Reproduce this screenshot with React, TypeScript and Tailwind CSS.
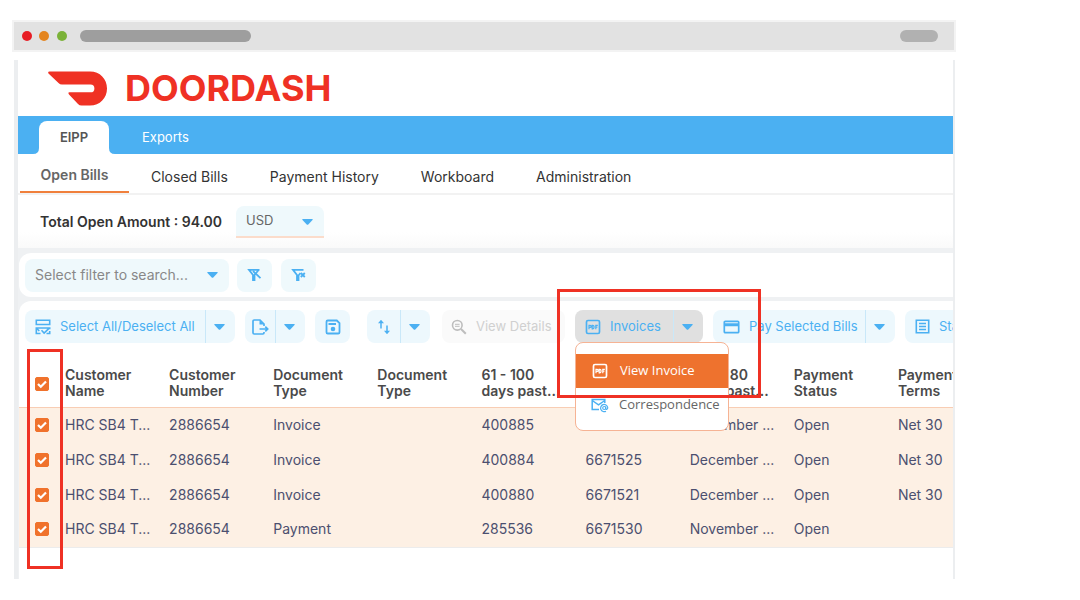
import { useState } from "react";
import type { ReactNode } from "react";
import { clsx } from "clsx";

const subTabs = ["Closed Bills", "Payment History", "Workboard", "Administration"];

const columns = [
  ["Customer", "Name"],
  ["Customer", "Number"],
  ["Document", "Type"],
  ["Document", "Type"],
  ["61 - 100", "days past..."],
  ["", ""],
  ["121 - 180", "days past..."],
  ["Payment", "Status"],
  ["Payment", "Terms"],
];

const bills = [
  ["HRC SB4 T...", "2886654", "Invoice", "", "400885", "", "December ...", "Open", "Net 30"],
  ["HRC SB4 T...", "2886654", "Invoice", "", "400884", "6671525", "December ...", "Open", "Net 30"],
  ["HRC SB4 T...", "2886654", "Invoice", "", "400880", "6671521", "December ...", "Open", "Net 30"],
  ["HRC SB4 T...", "2886654", "Payment", "", "285536", "6671530", "November ...", "Open", ""],
];

function Caret() {
  return (
    <svg width="11" height="6" viewBox="0 0 11 6" className="shrink-0" aria-hidden="true">
      <path d="M.8 0h9.400q1 0 .3 1L6.500 5.200q-1 1-2 0L.5 1Q-.2 0 .8 0z" fill="#4bb0f2" />
    </svg>
  );
}

function PdfIcon() {
  return (
    <svg width="16" height="16" viewBox="0 0 16 16" fill="none" stroke="currentColor" aria-hidden="true">
      <rect x="1.500" y="1.500" width="13" height="13" rx="1.500" strokeWidth="1.700" />
      <path
        d="M4 10.200V6.400h1.200a.9.9 0 0 1 0 2H4M7.200 6.400v3.400h.6a1.200 1.200 0 0 0 1.200-1.200V7.600a1.200 1.200 0 0 0-1.200-1.200zM10.800 10.200V6.400h2M10.800 8.200h1.600"
        strokeWidth="1.200"
      />
    </svg>
  );
}

function SelectAllIcon() {
  return (
    <svg width="16" height="16" viewBox="0 0 16 16" fill="none" stroke="currentColor" strokeWidth="1.600" aria-hidden="true">
      <path d="M1.300 1.300h13.400v4.200H1.300zM5.500 14.500H1.300V9h13.400v1.200M1.300 9l3 3M6.500 11.300l2.600 2.700 4.900-4.700M11.500 14.500h3.200V12" />
    </svg>
  );
}

function ExportIcon() {
  return (
    <svg width="18" height="18" viewBox="0 0 18 18" fill="none" stroke="currentColor" strokeWidth="1.700" aria-hidden="true">
      <path d="M13 8V6L9 2H3.200Q2 2 2 3.200v11.600Q2 16 3.200 16h8.600q1.200 0 1.200-1.200V14M8.500 11h8M14.300 8.600l2.400 2.400-2.400 2.400" />
      <path d="M8.500 2v4.500H13z" fill="currentColor" stroke="none" />
    </svg>
  );
}

function SaveIcon() {
  return (
    <svg width="16" height="16" viewBox="0 0 16 16" fill="none" stroke="currentColor" aria-hidden="true">
      <path d="M2.800 1.500h9l2.700 2.700v9q0 1.300-1.300 1.300H2.800q-1.300 0-1.300-1.300V2.800q0-1.300 1.300-1.300z" strokeWidth="1.800" />
      <path d="M3.500 5h7.500" strokeWidth="2.200" />
      <circle cx="8" cy="10" r="2.300" fill="currentColor" stroke="none" />
    </svg>
  );
}

function SortIcon() {
  return (
    <svg width="14" height="16" viewBox="0 0 14 16" fill="none" stroke="currentColor" strokeWidth="1.500" aria-hidden="true">
      <path d="M4 9.500V3M10 6.500V13" />
      <path d="M4 .8l3 3.400H1zM10 15.200l-3-3.400h6z" fill="currentColor" stroke="none" />
    </svg>
  );
}

function DetailsIcon() {
  return (
    <svg width="16" height="16" viewBox="0 0 16 16" fill="none" stroke="currentColor" aria-hidden="true">
      <circle cx="6.300" cy="6.300" r="4.800" strokeWidth="1.600" />
      <path d="M4 5.300h4.600M4 7.300h4.600" strokeWidth="1" />
      <path d="M10 10l4.800 4.800" strokeWidth="2" />
    </svg>
  );
}

function CardIcon() {
  return (
    <svg width="17" height="14" viewBox="0 0 17 14" fill="none" stroke="currentColor" aria-hidden="true">
      <rect x="1.300" y="1.300" width="14.400" height="11.400" rx="1" strokeWidth="1.700" />
      <path d="M1 4.800h15" strokeWidth="3" />
    </svg>
  );
}

function StatementIcon() {
  return (
    <svg width="15" height="15" viewBox="0 0 15 15" fill="none" stroke="currentColor" aria-hidden="true">
      <path d="M1.300 1.300h12.400v12.400H1.300z" strokeWidth="1.600" />
      <path d="M4 4.500h7M4 7.500h7M4 10.500h7" strokeWidth="1.500" />
    </svg>
  );
}

function MailIcon() {
  return (
    <svg width="18" height="15" viewBox="0 0 18 15" fill="none" stroke="currentColor" strokeWidth="1.500" aria-hidden="true">
      <path d="M8 11.500H1.200v-10h12.600V5M1.200 2.500l6.300 4.300 6.300-4.300" />
      <circle cx="13.200" cy="10" r="1.500" strokeWidth="1.200" />
      <path d="M14.700 8.500v2q.2 1 1.200.8 1-.6.8-2a3.600 3.600 0 1 0-1.700 3.900" strokeWidth="1.200" />
    </svg>
  );
}

function FilterIcon({ clear }: { clear?: boolean }) {
  return (
    <svg width="15" height="14" viewBox="0 0 15 14" fill="none" stroke="currentColor" strokeWidth="1.800" aria-hidden="true">
      {clear ? (
        <>
          <path d="M12.500 1.800H2L6 7v5.200h1.500V7.500L9.500 5" />
          <path d="M9.800 5l4 4M13.800 5l-4 4" />
        </>
      ) : (
        <>
          <path d="M12.500 1.800H2L6 7v5.200h1.500V7L11.800 1.800" />
          <path d="M6 3l7.500 7.200" />
        </>
      )}
    </svg>
  );
}

type ToolButtonProps = {
  icon: ReactNode;
  label: string;
  hideLabel?: boolean;
  menu?: boolean;
  active?: boolean;
  className?: string;
};

function ToolButton({ icon, label, hideLabel, menu, active, className }: ToolButtonProps) {
  return (
    <div
      className={clsx(
        "flex h-[33px] shrink-0 overflow-hidden rounded-lg text-[#4bb0f2]",
        active ? "bg-[#e0e0e0]" : "bg-[#edf8fd]",
        className
      )}
    >
      <button
        type="button"
        aria-label={label}
        className={clsx(
          "flex min-w-0 flex-1 items-center gap-[9px] whitespace-nowrap",
          hideLabel ? "justify-center" : "pl-[10px]"
        )}
      >
        <span className="shrink-0">{icon}</span>
        {!hideLabel && label}
      </button>
      {menu && (
        <button
          type="button"
          aria-label={`${label} options`}
          className="flex w-[30px] items-center justify-center border-l border-[#c9e8f9] pr-[2px]"
        >
          <Caret />
        </button>
      )}
    </div>
  );
}

type CheckProps = { label: string; checked: boolean; onChange: () => void };

function Check({ label, checked, onChange }: CheckProps) {
  return (
    <label className="relative ml-4 block size-[14px]">
      <input
        type="checkbox"
        aria-label={label}
        checked={checked}
        onChange={onChange}
        className="block size-[14px] appearance-none rounded-[2px] border border-[#f0722c] checked:bg-[#f0722c]"
      />
      <svg viewBox="0 0 14 14" className="pointer-events-none absolute inset-0" aria-hidden="true">
        <path d="M3 7l2.800 2.800L11 4.500" fill="none" stroke="#fff" strokeWidth="2.200" />
      </svg>
    </label>
  );
}

export default function App() {
  const [selected, setSelected] = useState([true, true, true, true]);
  const allSelected = selected.every(Boolean);

  const toggle = (index: number) => {
    setSelected(selected.map((value, i) => (i === index ? !value : value)));
  };

  return (
    <div className="min-h-screen bg-white pt-5 pr-[124px] pl-3 font-['Inter','Open_Sans',sans-serif] text-[13px]">
      {/* Browser bar */}
      <div className="flex h-8 items-center border-2 border-[#f3f3f3] bg-[#e2e2e2] pr-4 pl-2">
        <span className="size-[10px] rounded-full bg-[#e71d25]" />
        <span className="ml-[7px] size-[10px] rounded-full bg-[#e4851f]" />
        <span className="ml-2 size-[10px] rounded-full bg-[#7bb238]" />
        <span className="ml-[13px] h-3 w-[171px] rounded-full bg-[#9e9e9e]" />
        <span className="ml-auto h-3 w-[38px] rounded-full bg-[#b1b1b1]" />
      </div>

      <div className="mt-2 mr-px ml-[2px] h-[519px] overflow-hidden border-r-2 border-l-4 border-[#eceef0]">
        <header className="flex h-14 items-center gap-[18px] pl-[30px]">
          <svg width="59" height="35" viewBox="0 0 59 35" aria-hidden="true">
            <path
              d="M1.500.5H42C52 .5 59 8 59 17.500S52 34.500 42 34.500H33.500q-2 0-3.500-1.500L21 23.500q-1.500-2 .5-2.200H42.500a3.900 3.900 0 0 0 0-7.800H14q-2 0-3.500-1.500L.5 2.500Q-.5.5 1.500.5z"
              fill="#ef3124"
            />
          </svg>
          <span className="text-4xl leading-none font-bold text-[#ef3124]">DOORDASH</span>
        </header>

        <nav className="flex h-[38px] items-end bg-[#4bb0f2] pl-[21px]">
          <a
            href="#eipp"
            className="relative flex h-[33px] w-[70px] items-center justify-center rounded-t-lg bg-white font-semibold text-[#555]"
          >
            <svg width="6" height="6" viewBox="0 0 6 6" className="absolute bottom-0 -left-[6px]" aria-hidden="true">
              <path d="M6 0v6H0q6 0 6-6z" fill="#fff" />
            </svg>
            EIPP
            <svg width="6" height="6" viewBox="0 0 6 6" className="absolute -right-[6px] bottom-0" aria-hidden="true">
              <path d="M0 0v6h6q-6 0-6-6z" fill="#fff" />
            </svg>
          </a>
          <a href="#exports" className="ml-[33px] flex h-[33px] items-center text-white">
            Exports
          </a>
        </nav>

        <nav className="flex h-[41px] items-stretch border-b-2 border-[#f2f2f2] pl-[2px] text-sm">
          <a
            href="#open"
            className="flex w-[109px] items-center justify-center border-b-2 border-[#f0803c] pt-1 font-semibold text-[#666]"
          >
            Open Bills
          </a>
          <div className="ml-[22px] flex items-center gap-[42px] pt-[6px] text-[#333]">
            {subTabs.map((tab) => (
              <a key={tab} href={`#${tab}`}>
                {tab}
              </a>
            ))}
          </div>
        </nav>

        <section className="flex h-[53px] items-center gap-[14px] bg-linear-to-b from-white from-70% to-[#fafafa] pt-px pl-[22px]">
          <span className="text-sm font-semibold text-[#333]">Total Open Amount : 94.00</span>
          <label className="relative flex items-center">
            <select
              aria-label="Currency"
              className="h-8 w-[88px] appearance-none rounded-t-lg border-b-2 border-[#fbdccb] bg-[#eff9fc] pl-[10px] text-[#666]"
            >
              <option>USD</option>
            </select>
            <span className="pointer-events-none absolute right-[11px]">
              <Caret />
            </span>
          </label>
        </section>

        <main className="bg-[#eff1f3] pt-[5px] pl-px">
          <section className="flex h-11 items-center rounded-l-xl bg-white pl-[6px]">
            <label className="relative flex items-center">
              <select
                aria-label="Saved filters"
                className="h-[33px] w-[204px] appearance-none rounded-lg bg-[#eff9fc] pl-[10px] text-sm text-[#888]"
              >
                <option>Select filter to search...</option>
              </select>
              <span className="pointer-events-none absolute right-[11px]">
                <Caret />
              </span>
            </label>
            <button
              type="button"
              aria-label="Edit filter"
              className="ml-2 flex h-[33px] w-[35px] items-center justify-center rounded-lg bg-[#eff9fc] text-[#4bb0f2]"
            >
              <FilterIcon />
            </button>
            <button
              type="button"
              aria-label="Clear filter"
              className="ml-[9px] flex h-[33px] w-[35px] items-center justify-center rounded-lg bg-[#eff9fc] text-[#4bb0f2]"
            >
              <FilterIcon clear />
            </button>
          </section>

          <section className="mt-1 rounded-tl-xl bg-white pt-[9px]">
            <div className="flex gap-[10px] pl-[6px]">
              <ToolButton icon={<SelectAllIcon />} label="Select All/Deselect All" menu className="w-[210px]" />
              <ToolButton icon={<ExportIcon />} label="Export" hideLabel menu className="w-[60px]" />
              <ToolButton icon={<SaveIcon />} label="Save" hideLabel className="w-[35px]" />
              <ToolButton icon={<SortIcon />} label="Sort" hideLabel menu className="ml-[7px] w-[63px]" />
              <button
                type="button"
                disabled
                className="ml-[2px] flex h-[33px] w-[123px] shrink-0 items-center gap-[9px] rounded-lg bg-[#fafafa] pl-[9px] whitespace-nowrap text-[#d0d0d0]"
              >
                <span className="shrink-0 text-[#bdbdbd]">
                  <DetailsIcon />
                </span>
                View Details
              </button>

              <div className="relative shrink-0">
                <ToolButton icon={<PdfIcon />} label="Invoices" menu active className="w-[128px]" />
                <div className="absolute top-8 left-0 z-10 h-[89px] w-[154px] rounded-lg border border-[#f6b394] bg-white pt-[11px] font-['Open_Sans',sans-serif]">
                  <button
                    type="button"
                    className="flex h-[34px] w-full items-center gap-3 bg-[#ee722e] pl-4 text-white"
                  >
                    <PdfIcon />
                    View Invoice
                  </button>
                  <button
                    type="button"
                    className="flex h-[34px] w-full items-center gap-[10px] pl-[15px] text-[#666]"
                  >
                    <span className="shrink-0 text-[#4bb0f2]">
                      <MailIcon />
                    </span>
                    Correspondence
                  </button>
                </div>
                {/* Callout around the invoice menu */}
                <div className="pointer-events-none absolute -top-[21px] -left-[18px] z-20 h-[109px] w-[204px] border-3 border-[#ef3124]" />
              </div>

              <ToolButton icon={<CardIcon />} label="Pay Selected Bills" menu className="w-[182px]" />
              <ToolButton icon={<StatementIcon />} label="Statements" className="w-[140px]" />
            </div>

            <div className="relative">
              <table className="w-full min-w-[983px] table-fixed border-collapse text-left text-sm">
                <colgroup>
                  <col className="w-[46px]" />
                  {columns.map((_, i) => (
                    <col key={i} />
                  ))}
                </colgroup>
                <thead>
                  <tr className="h-[64px] border-b border-[#f8cdb4]">
                    <th className="pt-[18px] align-middle">
                      <Check
                        label="Select all bills"
                        checked={allSelected}
                        onChange={() => setSelected(selected.map(() => !allSelected))}
                      />
                    </th>
                    {columns.map(([first, second], i) => (
                      <th key={i} className="pb-2 align-bottom leading-4 font-semibold text-[#4a4a4a]">
                        {first}
                        <br />
                        {second}
                      </th>
                    ))}
                  </tr>
                </thead>
                <tbody>
                  {bills.map((bill, row) => (
                    <tr key={row} className="h-[35px] bg-[#fdf0e4] last:border-b last:border-[#ececec]">
                      <td>
                        <Check
                          label={`Select bill ${row + 1}`}
                          checked={selected[row]}
                          onChange={() => toggle(row)}
                        />
                      </td>
                      {bill.map((value, i) => (
                        <td key={i} className="whitespace-nowrap text-[#4b4f6f]">
                          {value}
                        </td>
                      ))}
                    </tr>
                  ))}
                </tbody>
              </table>
              {/* Callout around the check boxes */}
              <div className="pointer-events-none absolute top-[6px] left-2 z-20 h-[220px] w-9 border-3 border-[#ef3124]" />
            </div>
            <div className="h-[60px]" />
          </section>
        </main>
      </div>
    </div>
  );
}
